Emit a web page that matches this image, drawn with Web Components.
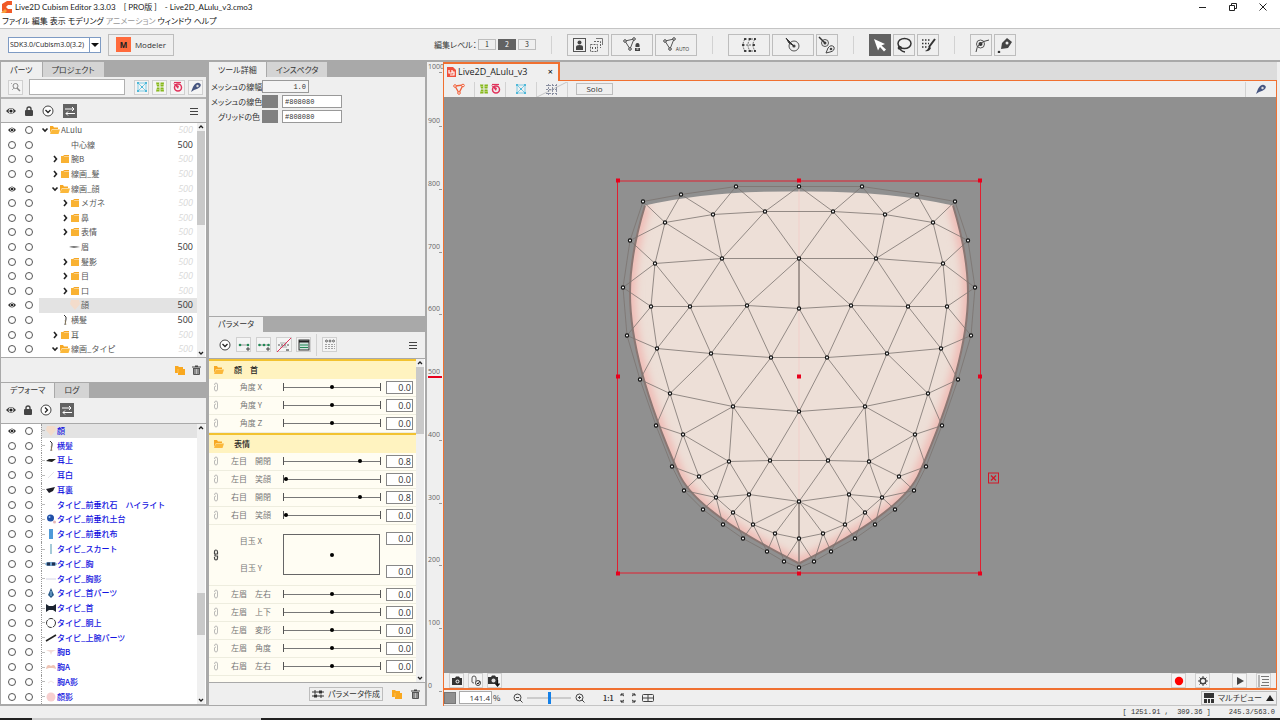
<!DOCTYPE html>
<html lang="ja">
<head>
<meta charset="utf-8">
<title>Live2D Cubism Editor 3.3.03</title>
<style>
  html, body { margin: 0; height: 100%; }
  body {
    font: 8px/12px "Noto Sans CJK JP", sans-serif;
    font-feature-settings: "palt";
    color: #333;
    background: #efefef;
    overflow: hidden;
  }
</style>
</head>
<body>
<cubism-editor></cubism-editor>

<script>
// ---------- icons: [viewBox width, viewBox height, markup] ----------
const ICONS = {
  logo: [12, 12, '<path d="M1 3L6 0H11V4H7L5 6L7 8H11V12H3L1 10Z" fill="#f05a28"/><path d="M0 12L4 8L6 10L4 12Z" fill="#f9a13a"/>'],
  min: [10, 10, '<path d="M1 5.5H8" stroke="#222"/>'],
  restore: [10, 10, '<path d="M1.5 3.5H6.5V8.500H1.500ZM3.500 3V1.500H8.500V6.500H7" fill="none" stroke="#222"/>'],
  close: [10, 10, '<path d="M1.500 1.500L8.500 8.500M8.500 1.500L1.500 8.500" stroke="#222"/>'],
  eye: [10, 8, '<path d="M0 4Q5 -2 10 4Q5 10 0 4Z" fill="#333"/><circle cx="5" cy="4" r="2.500" fill="#eee"/><circle cx="5" cy="4" r="1.600" fill="#222"/>'],
  eyesmall: [8, 6, '<path d="M0 3Q4 -2 8 3Q4 8 0 3Z" fill="#333"/><circle cx="4" cy="3" r="1.900" fill="#eee"/><circle cx="4" cy="3" r="1.200" fill="#222"/>'],
  lock: [8, 10, '<rect y="4" width="8" height="6" rx="1" fill="#444"/><path d="M2 5V3Q2 1 4 1T6 3V5" fill="none" stroke="#444" stroke-width="1.400"/>'],
  down: [12, 12, '<circle cx="6" cy="6" r="5" fill="#fff" stroke="#444"/><path d="M3.500 5L6 7.500L8.500 5" fill="none" stroke="#222" stroke-width="1.300"/>'],
  right: [12, 12, '<circle cx="6" cy="6" r="5" fill="#fff" stroke="#444"/><path d="M5 3.500L7.500 6L5 8.500" fill="none" stroke="#222" stroke-width="1.300"/>'],
  swap: [14, 14, '<rect width="14" height="14" fill="#626262"/><path d="M2 5H11M9 3L11 5L9 7M12 9.500H3M5 7.500L3 9.500L5 11.500" fill="none" stroke="#fff"/>'],
  menu: [10, 10, '<path d="M1 2.500H9M1 5.500H9M1 8.500H9" stroke="#444"/>'],
  search: [12, 12, '<circle cx="5.500" cy="5" r="2.500" fill="none" stroke="#888"/><path d="M7 7L10 10" stroke="#888" stroke-width="1.500"/><path d="M1 3L2 2M2 9L4 7" stroke="#aaa"/>'],
  warp: [12, 12, '<g stroke="#7fcbe4" fill="none"><path d="M2 2H10V10H2ZM2 2L10 10M10 2L2 10"/></g><g fill="#4fb8d8"><path d="M1 1H3V3H1ZM9 1H11V3H9ZM1 9H3V11H1ZM9 9H11V11H9ZM5 5H7V7H5Z"/></g>'],
  grid: [12, 12, '<g fill="#86b81c"><path d="M2 1.500H5.500Q4.500 3 5.500 5.500H3ZM3 6.500H5.500V10.500H2ZM6.500 1.500H10L9.500 5.500H6.500ZM6.500 6.500H9.500L10 10.500H6.500Z"/></g><path d="M2 3.500H10M2 8.500H10" stroke="#c9df8e" stroke-width=".6"/>'],
  rotate: [12, 12, '<circle cx="6" cy="6.500" r="3.500" fill="none" stroke="#e0325a" stroke-width="1.500"/><path d="M1 2L7 5L6 8Z" fill="#e0325a"/><path d="M2 1.500H9" stroke="#e0325a" stroke-width="1.200"/>'],
  pen: [12, 12, '<path d="M1 11L3 6Q6 1 9 2Q12 3 10 6Q8 8 4 9Z" fill="#465580"/><circle cx="7.500" cy="5" r="1.200" fill="#ddd"/>'],
  folder: [9, 8, '<path d="M0 1H3L4 2H8V8H0Z" fill="#f9b233"/><path d="M2 0H8V1.500H4Z" fill="#f5a623"/>'],
  open: [10, 8, '<path d="M0 7V0H3L4 1.500H8V3H2Z" fill="#f7a823"/><path d="M2 3.500H10L8.500 8H0Z" fill="#fbb83a"/>'],
  newfolder: [10, 10, '<path d="M0 1H3L4 2H8V4H10V10H3V8H0Z" fill="#f9a820"/><path d="M3 8V4" stroke="#ffd27a" stroke-width=".6"/>'],
  trash: [9, 10, '<path d="M0 2H9M3 1H6" stroke="#444" stroke-width="1.200"/><path d="M1 3H8V9Q8 10 7 10H2Q1 10 1 9Z" fill="#555"/><path d="M3 4V9M4.500 4V9M6 4V9" stroke="#ddd" stroke-width=".8"/>'],
  key2: [12, 12, '<path d="M2 6H10" stroke="#999"/><circle cx="2" cy="6" r="1.300" fill="#285"/><circle cx="10" cy="6" r="1.300" fill="#285"/><path d="M8 10H12M10 8V12" stroke="#222" stroke-width=".8"/>'],
  key3: [12, 12, '<path d="M1 6H11" stroke="#999"/><circle cx="1.500" cy="6" r="1.300" fill="#285"/><circle cx="6" cy="6" r="1.300" fill="#285"/><circle cx="10.500" cy="6" r="1.300" fill="#285"/><path d="M8 10H12M10 8V12" stroke="#222" stroke-width=".8"/>'],
  keydel: [14, 14, '<path d="M1 7H12" stroke="#888" stroke-width="1.500" stroke-dasharray="2 1"/><path d="M3 5H10M3 9H10" stroke="#aaa"/><path d="M0 14L14 0" stroke="#e0325a"/><path d="M9 12H12" stroke="#222"/>'],
  table: [12, 12, '<rect x="1" y="1" width="10" height="10" fill="#cfe3dc" stroke="#333"/><path d="M1 2.500H11" stroke="#222" stroke-width="2"/><path d="M2 6H10M2 8.500H10" stroke="#285" stroke-width="1.200"/>'],
  dots: [12, 12, '<g fill="none" stroke="#444" stroke-width=".8"><circle cx="2.500" cy="2" r="1"/><circle cx="6" cy="2" r="1"/><circle cx="9.500" cy="2" r="1"/></g><path d="M1 5.500H11M1 7.500H11M1 9.500H11" stroke="#999" stroke-width=".9" stroke-dasharray="2 1"/>'],
  clip: [6, 10, '<path d="M1.500 3Q1.500 1 3 1T4.500 3V7Q4.500 9 3 9T1.500 7V5Q1.500 4 3 4" fill="none" stroke="#aaa" stroke-width=".8"/>'],
  link: [6, 12, '<path d="M1.500 5V3Q1.500 1 3 1T4.500 3V5H2V7H4.500V9Q4.500 11 3 11T1.500 9V8" fill="none" stroke="#444" stroke-width="1.200"/>'],
  sliders: [12, 10, '<path d="M0 3H12M0 7H12" stroke="#333"/><path d="M7 1.500H10V4.500H7ZM2 5.500H5V8.500H2Z" fill="#333"/><path d="M3 1V5M9 5.500V9" stroke="#333"/>'],
  atlas: [30, 14, '<rect x=".5" y=".5" width="12" height="13" fill="none" stroke="#555"/><circle cx="6.500" cy="4.500" r="2" fill="#444"/><path d="M3 12V9Q3 7 6.500 7T10 9V12Z" fill="#444"/><path d="M17.500 6.500H24.500V13.500H17.500ZM21 3.500H27.500V10" fill="none" stroke="#666" stroke-dasharray="2 1"/><path d="M23 .500H29.500V7" fill="none" stroke="#777"/><path d="M19 9H20V11H19ZM22 9H23V11H22Z" fill="#555"/>'],
  meshpen: [18, 16, '<g fill="none" stroke="#555"><path d="M2 4L11 2L7 12Z"/></g><g fill="#eee" stroke="#444"><circle cx="2" cy="4" r="1.300"/><circle cx="11" cy="2" r="1.300"/><circle cx="7" cy="12" r="1.300"/></g><path d="M14.500 6Q17 6 16.500 10H12.500Q12 6 14.500 6ZM12 11H17V14H12Z" fill="#444"/><path d="M13.500 12H15.500" stroke="#fff"/>'],
  mesh: [14, 16, '<path d="M2 4L11 2L7 12Z" fill="none" stroke="#555"/><g fill="#eee" stroke="#444"><circle cx="2" cy="4" r="1.300"/><circle cx="11" cy="2" r="1.300"/><circle cx="7" cy="12" r="1.300"/></g>'],
  warpnew: [16, 16, '<path d="M4 2H14M2 8H14M4 14H14M4 2Q0 8 4 14M9 2Q5 8 9 14M14 2Q10 8 14 14" fill="none" stroke="#666" stroke-dasharray="2 1"/><g fill="#222"><circle cx="4" cy="2" r="1.100"/><circle cx="9" cy="2" r="1.100"/><circle cx="14" cy="2" r="1.100"/><circle cx="4" cy="14" r="1.100"/><circle cx="9" cy="14" r="1.100"/><circle cx="14" cy="14" r="1.100"/><circle cx="2" cy="8" r="1.100"/><circle cx="13" cy="8" r="1.100"/></g>'],
  rotnew: [16, 16, '<circle cx="9" cy="9" r="5" fill="none" stroke="#555"/><circle cx="9" cy="9" r="1.600" fill="#444"/><path d="M1 1L9 9L4 6Z" fill="#333" stroke="#333"/>'],
  rotpen: [18, 18, '<circle cx="7" cy="7" r="3.500" fill="none" stroke="#555"/><circle cx="7" cy="7" r="1.500" fill="#444"/><path d="M1 1L7 7" stroke="#333" stroke-width="1.500"/><path d="M8 17L10 12Q13 8 16 11Q17 15 12 16Z" fill="none" stroke="#444"/><circle cx="13" cy="13" r="1.300" fill="#444"/>'],
  arrow: [14, 14, '<path d="M1 1L12 6L8.500 7.500L13 11.500L11 13.500L7 9L5 12.500Z" fill="#fff"/>'],
  lasso: [16, 16, '<ellipse cx="8.500" cy="6.500" rx="6.500" ry="5" fill="none" stroke="#333" stroke-width="1.500"/><path d="M3 9Q1 13 5 12Q6 9 3 10Q4 14 9 15" fill="none" stroke="#333" stroke-width="1.300"/>'],
  brush: [16, 16, '<path d="M2 3H11M2 6.500H9M2 10H7" stroke="#333" stroke-width="1.300" stroke-dasharray="1.500 1.500"/><path d="M15 2L9 10" stroke="#333" stroke-width="2"/><path d="M9 9L11 11Q9 15 5 14Q8 13 9 9Z" fill="#333"/>'],
  curve: [16, 16, '<circle cx="7.500" cy="7" r="4" fill="none" stroke="#555"/><circle cx="7.500" cy="7" r="2" fill="#333"/><path d="M3 15Q4 5 16 3" fill="none" stroke="#444"/>'],
  nib: [16, 16, '<path d="M4 12L5 6L10 1L15 5L11 11Z" fill="#444"/><circle cx="10" cy="6" r="1.500" fill="#eee"/><circle cx="2" cy="15" r="1.300" fill="#333"/>'],
  doc: [9, 10, '<path d="M0 0H6L9 3V10H0Z" fill="#f0503c"/><path d="M2 3V6H5V3M5 5H7V8H3" fill="none" stroke="#fff" stroke-width="1.200"/>'],
  meshred: [14, 12, '<path d="M3 3L11 2L7 10Z" fill="none" stroke="#f0603a" stroke-width="1.300"/><g fill="#fff" stroke="#f0603a"><circle cx="3" cy="3" r="1.300"/><circle cx="11" cy="2.500" r="1.300"/><circle cx="7" cy="10" r="1.300"/></g>'],
  gridoff: [30, 15, '<path d="M0 15L30 0" stroke="#bbb" stroke-width=".8"/><path d="M9 3.500H21M9 7.500H21M9 11.500H21M11.500 2V13M15.500 2V13M19.500 2V13" stroke="#8a8fa0" stroke-dasharray="2 1"/>'],
  camera: [12, 10, '<path d="M1 2H4L5 .500H8L9 2H11V9H1Z" fill="#333"/><circle cx="6.500" cy="5.500" r="2" fill="#ddd"/><circle cx="6.500" cy="5.500" r="1" fill="#333"/>'],
  clips: [12, 12, '<path d="M6 7V3Q6 1 4 1T2 3V7Q2 8 4 8" fill="none" stroke="#555"/><circle cx="8" cy="8" r="2.500" fill="#eee" stroke="#444"/><path d="M7 8L8 9L10 6" fill="none" stroke="#222"/>'],
  camdown: [13, 12, '<path d="M0 2H3L4 .500H7L8 2H10V9H0Z" fill="#333"/><circle cx="5.500" cy="5.500" r="2" fill="#ddd"/><path d="M9.500 5V10M7.500 8.500L9.500 11L11.500 8.500" fill="none" stroke="#111" stroke-width="1.300"/>'],
  rec: [10, 10, '<circle cx="5" cy="5" r="4.200" fill="#f00"/>'],
  gear: [10, 10, '<circle cx="5" cy="5" r="2.800" fill="none" stroke="#444" stroke-width="1.400"/><path d="M5 0V2M5 8V10M0 5H2M8 5H10M1.500 1.500L3 3M7 7L8.500 8.500M8.500 1.500L7 3M3 7L1.500 8.500" stroke="#444"/>'],
  play: [10, 10, '<path d="M2 1L9 5L2 9Z" fill="#444"/>'],
  list: [12, 12, '<path d="M3 1.500H11M4 4.500H11M4 7.500H11M3 10.500H11" stroke="#777"/><path d="M1 0V12" stroke="#777"/>'],
  zoomout: [10, 10, '<circle cx="4.500" cy="4.500" r="3.500" fill="none" stroke="#444"/><path d="M3 4.500H6M7 7L9.500 9.500" stroke="#444"/>'],
  zoomin: [10, 10, '<circle cx="4.500" cy="4.500" r="3.500" fill="none" stroke="#444"/><path d="M3 4.500H6M4.500 3V6M7 7L9.500 9.500" stroke="#444"/>'],
  fit: [16, 10, '<path d="M1 3V1H4M1 1L4 3M15 3V1H12M15 1L12 3M1 7V9H4M1 9L4 7M15 7V9H12M15 9L12 7" fill="none" stroke="#333"/>'],
  center: [14, 10, '<rect x="1.500" y="1.500" width="11" height="7" rx="1" fill="none" stroke="#444"/><path d="M2 5H12M7 2V8" stroke="#444"/>'],
  multi: [10, 10, '<path d="M0 0H10V5H0ZM0 6H3V10H0ZM4 6H6V10H4ZM7 6H10V10H7Z" fill="#333"/>'],
  up: [8, 6, '<path d="M4 0L8 6H0Z" fill="#222"/>'],
};

class UiIcon extends HTMLElement {
  constructor() {
    super();
    this._shadowRoot = this.attachShadow({ mode: 'open' });
  }
  connectedCallback() {
    const [w, h, body] = ICONS[this.getAttribute('name')];
    this._shadowRoot.innerHTML = `
      <style>
        :host { display: inline-flex; flex: none; }
        svg { display: block; }
      </style>
      <svg width="${w}" height="${h}" viewBox="0 0 ${w} ${h}" aria-hidden="true">${body}</svg>`;
  }
}
customElements.define('ui-icon', UiIcon);

// push button, icon and/or text goes in the slot
class UiButton extends HTMLElement {
  constructor() {
    super();
    this._shadowRoot = this.attachShadow({ mode: 'open' });
  }
  connectedCallback() {
    this._shadowRoot.innerHTML = `
      <style>
        :host { display: inline-flex; flex: none; width: 22px; height: 22px; }
        button {
          flex: 1; display: flex; align-items: center; justify-content: center; gap: 4px;
          padding: 0; border: 1px solid #bdbdbd; background: #efefef;
          font: inherit; font-feature-settings: inherit; color: inherit; white-space: nowrap;
        }
        :host([wide]) { width: 42px; }
        :host([mini]) { width: 18px; height: 11px; font-size: 7px; line-height: 9px; }
        :host([small]) { width: 15px; height: 15px; }
        :host([small]) button { border-color: #d0d0d0; background: #f4f4f4; }
        :host([bare]) { width: 14px; height: 14px; }
        :host([bare]) button { border: 0; background: none; }
        :host([auto]) { width: auto; height: 14px; }
        :host([auto]) button { padding: 0 2px; }
        :host([on]) button { background: #626262; border-color: #626262; color: #fff; }
      </style>
      <button type="button" aria-label="${this.getAttribute('label') || ''}"><slot></slot></button>`;
    if (!this.hasAttribute('label')) {
      this._shadowRoot.querySelector('button').removeAttribute('aria-label');
    }
  }
}
customElements.define('ui-button', UiButton);

class ScrollBar extends HTMLElement {
  constructor() {
    super();
    this._shadowRoot = this.attachShadow({ mode: 'open' });
  }
  connectedCallback() {
    this._shadowRoot.innerHTML = `
      <style>
        :host { display: flex; flex: none; flex-direction: column; align-items: center; width: 8px; background: #f0f0f0; }
        svg { flex: none; }
        i { width: 8px; background: #c9c9c9; flex: ${this.getAttribute('size')}; }
        .before { background: none; flex: ${this.getAttribute('from')}; }
        .after { background: none; flex: ${100 - this.getAttribute('from') - this.getAttribute('size')}; }
      </style>
      <svg width="8" height="8"><path d="M2 5L4 3L6 5" fill="none" stroke="#222" stroke-width="1.300"/></svg>
      <i class="before"></i><i></i><i class="after"></i>
      <svg width="8" height="8"><path d="M2 3L4 5L6 3" fill="none" stroke="#222" stroke-width="1.300"/></svg>`;
  }
}
customElements.define('scroll-bar', ScrollBar);

// panel with a tab strip, first tab is the current one
class DockPanel extends HTMLElement {
  constructor() {
    super();
    this._shadowRoot = this.attachShadow({ mode: 'open' });
  }
  connectedCallback() {
    const tabs = this.getAttribute('tabs').split(',');
    this._shadowRoot.innerHTML = `
      <style>
        :host { display: flex; flex-direction: column; min-height: 0; background: #efefef; overflow: hidden; }
        nav { display: flex; gap: 1px; height: 15px; flex: none; background: #a9a9a9; }
        button {
          border: 0; padding: 0 9px; background: #d4d4d4; color: #333;
          font: inherit; font-feature-settings: inherit; line-height: 14px;
        }
        button:first-child { background: #efefef; }
      </style>
      <nav>${tabs.map(t => `<button type="button">${t}</button>`).join('')}</nav>
      <slot></slot>`;
  }
}
customElements.define('dock-panel', DockPanel);

// small pictures of the drawables
const THUMBS = {
  face: '<path d="M2 1H10L11 5L6 11L1 5Z" fill="#f3dccb"/>',
  brow: '<path d="M0 6Q4 4 11 6L5 7Z" fill="#777"/>',
  hair: '<path d="M5 1L7 3V5L6 11" fill="none" stroke="#333"/><path d="M6 6L7 11" stroke="#b8a070" stroke-width=".6"/>',
  eartop: '<path d="M1 7L4 5L11 5L7 8Z" fill="#222"/>',
  earwhite: '<path d="M3 9L9 3" stroke="#e4e4e4"/>',
  earback: '<path d="M1 5L10 3L8 7L4 9Z" fill="#1c1c26"/>',
  gem: '<circle cx="5.500" cy="5" r="3.500" fill="#1f4fa8"/><circle cx="4.500" cy="4" r="1" fill="#9cc4f0"/><circle cx="9.500" cy="9" r="1.500" fill="#e6b8b8"/>',
  cloth: '<path d="M4 1H8V11H4Z" fill="#4f9ad8"/>',
  skirt: '<path d="M6 1V11" stroke="#7fb4c8" stroke-width="1.400"/>',
  chest: '<path d="M0 6Q1 4 3 4H9Q11 4 12 6Q11 8 9 8H3Q1 8 0 6Z" fill="#6f9fc8"/><path d="M2 4.500H5V7.500H2ZM7 4.500H10V7.500H7Z" fill="#203050"/>',
  line: '<path d="M1 6H11" stroke="#d4d4e4"/>',
  drop: '<path d="M6 1L9 8L6 11L3 8Z" fill="#285888"/><path d="M6 4V9" stroke="#8cc4e8"/>',
  bow: '<path d="M1 2L4 4H8L11 2V10L8 8H4L1 10Z" fill="#1c2430"/>',
  ring: '<circle cx="6" cy="6" r="4.500" fill="none" stroke="#333" stroke-dasharray="5 1"/>',
  stick: '<path d="M1 9L11 3" stroke="#222" stroke-width="1.600"/>',
  pinkT: '<path d="M1 4H11L7 6L6 9L5 6Z" fill="#f3dcd6"/>',
  pinkM: '<path d="M1 8Q2 2 6 5Q10 2 11 8L8 7H4Z" fill="#eec4b4"/>',
  faint: '<path d="M3 7L6 5L9 7" fill="none" stroke="#f0e4e4"/>',
  blush: '<circle cx="6" cy="6" r="4.500" fill="#f7cfcf"/>',
};

class TreeRow extends HTMLElement {
  constructor() {
    super();
    this._shadowRoot = this.attachShadow({ mode: 'open' });
  }
  connectedCallback() {
    const kind = this.getAttribute('kind');
    const deep = this.getAttribute('depth') || 0;
    const value = this.getAttribute('value') || '';
    const own = this.hasAttribute('own');
    const arrows = {
      open: '<svg width="8" height="8"><path d="M1.500 2.500L4 5L6.500 2.500" fill="none" stroke="#222" stroke-width="1.600"/></svg>',
      folder: '<svg width="8" height="8"><path d="M3 1L5.500 4L3 7" fill="none" stroke="#222" stroke-width="1.600"/></svg>',
    };
    const icon = arrows[kind] ? `<ui-icon name="${kind}"></ui-icon>` : (THUMBS[kind] ? `<svg width="12" height="12" viewBox="0 0 12 12">${THUMBS[kind]}</svg>` : '');
    const dot = this.hasAttribute('eye') ? '<ui-icon name="eyesmall"></ui-icon>' : '<i></i>';
    this._shadowRoot.innerHTML = `
      <style>
        :host { display: flex; flex: 1; min-height: 0; align-items: stretch; color: #555; font-feature-settings: normal; }
        button { display: flex; align-items: center; justify-content: center; width: 17px; padding: 0; border: 0; background: none; }
        button:first-of-type { margin-left: 2px; }
        i { width: 6px; height: 6px; border: 1px solid #555; border-radius: 50%; }
        .name { flex: 1; display: flex; align-items: center; margin-left: 2px; padding-left: ${2 + deep * 10}px; white-space: nowrap; }
        .arrow { width: 8px; display: flex; flex: none; }
        .icon { width: 12px; display: flex; align-items: center; justify-content: center; flex: none; }
        .value { font: 9px/12px "Open Sans", sans-serif; margin: auto 4px auto auto; color: ${own ? '#333' : '#d8d8d8'}; font-style: ${own ? 'normal' : 'italic'}; }
        :host([selected]) .name { background: #e3e3e3; }
        :host([blue]) { color: #1414e0; font-weight: 500; }
        :host([blue]) .name { margin-left: 4px; padding-left: 0; border-left: 1px dotted #999; }
        :host([blue]) .arrow { width: 3px; height: 1px; background: #bbb; }
      </style>
      <button type="button" aria-label="表示">${dot}</button>
      <button type="button" aria-label="ロック"><i></i></button>
      <div class="name">
        <span class="arrow">${arrows[kind] || ''}</span>
        <span class="icon">${icon}</span>
        <slot></slot>
        ${value ? `<span class="value">${value}</span>` : ''}
      </div>`;
  }
}
customElements.define('tree-row', TreeRow);

class ParamRow extends HTMLElement {
  constructor() {
    super();
    this._shadowRoot = this.attachShadow({ mode: 'open' });
  }
  connectedCallback() {
    const name = this.getAttribute('name');
    const value = this.getAttribute('value') || '0.0';
    const min = this.getAttribute('min') || -1;
    this._shadowRoot.innerHTML = `
      <style>
        :host { display: flex; flex: none; align-items: center; height: 17px; border-bottom: 1px solid #eeeddf; background: #fffdf3; font-feature-settings: normal; }
        ui-icon { margin-left: 4px; }
        label { width: 64px; text-align: center; color: #777; white-space: pre; }
        .track {
          appearance: none; width: 98px; height: 8px; margin: 0 5px 0 0; box-sizing: border-box;
          border: solid #555; border-width: 0 1px;
          background: linear-gradient(#777, #777) center / 100% 1px no-repeat;
        }
        .track::-webkit-slider-thumb { appearance: none; width: 4px; height: 4px; border-radius: 50%; background: #000; }
        .value { box-sizing: border-box; width: 27px; height: 13px; padding: 0 1px 0 0; border: 1px solid #888; background: #fff; font: 9px/11px "Open Sans", sans-serif; color: #333; text-align: right; }
      </style>
      <ui-icon name="clip"></ui-icon>
      <label for="v">${name}</label>
      <input class="track" type="range" min="${min}" max="1" step="0.1" value="${value}" aria-label="${name}">
      <input class="value" id="v" value="${value}">`;
  }
}
customElements.define('param-row', ParamRow);

// two linked parameters edited on one pad
class ParamPad extends HTMLElement {
  constructor() {
    super();
    this._shadowRoot = this.attachShadow({ mode: 'open' });
  }
  connectedCallback() {
    this._shadowRoot.innerHTML = `
      <style>
        :host { display: flex; flex: none; align-items: center; height: 60px; border-bottom: 1px solid #eeeddf; background: #fffdf3; font-feature-settings: normal; }
        ui-icon { margin-left: 4px; }
        .names, .values { display: flex; flex-direction: column; justify-content: space-between; }
        .names { width: 64px; height: 39px; text-align: center; color: #777; }
        .pad { display: grid; place-items: center; box-sizing: border-box; width: 97px; height: 41px; border: 1px solid #666; margin-right: 6px; }
        .pad i { width: 4px; height: 4px; border-radius: 50%; background: #000; }
        .values { height: 46px; }
        input { box-sizing: border-box; width: 27px; height: 13px; padding: 0 1px 0 0; border: 1px solid #888; background: #fff; font: 9px/11px "Open Sans", sans-serif; color: #333; text-align: right; }
      </style>
      <ui-icon name="link"></ui-icon>
      <div class="names"><label for="x">目玉 X</label><label for="y">目玉 Y</label></div>
      <div class="pad"><i></i></div>
      <div class="values"><input id="x" value="0.0"><input id="y" value="0.0"></div>`;
  }
}
customElements.define('param-pad', ParamPad);

class ParamGroup extends HTMLElement {
  constructor() {
    super();
    this._shadowRoot = this.attachShadow({ mode: 'open' });
  }
  connectedCallback() {
    this._shadowRoot.innerHTML = `
      <style>
        :host { display: block; }
        header {
          display: flex; align-items: center; gap: 10px; height: 18px; padding-left: 5px;
          border-top: 2px solid #f2c230; background: #fff3c0; color: #222; font-weight: 500;
          font-feature-settings: normal; white-space: pre;
        }
      </style>
      <header><ui-icon name="open"></ui-icon>${this.getAttribute('name')}</header>
      <slot></slot>`;
  }
}
customElements.define('param-group', ParamGroup);

// ---------- art mesh ----------
// left half only, the right half is mirrored on AXIS
const AXIS = 799;
const OUTER = [[799, 187], [736, 187], [681, 195], [643, 202], [630, 241], [623, 288], [627, 336], [640, 380], [656, 426], [672, 467], [684, 491], [703, 510], [723, 525], [743, 539], [767, 552], [784, 562], [799, 568]];
const INNER = [
  [665, 223], [713, 215], [765, 212], [655, 264], [722, 259], [651, 307], [690, 307], [747, 306],
  [657, 349], [711, 354], [771, 358], [670, 394], [733, 407], [683, 435], [729, 462], [770, 461],
  [699, 477], [716, 498], [749, 495], [733, 513], [753, 525], [775, 534],
];
const CENTER = [[799, 259], [799, 309], [799, 412], [799, 502], [799, 539]];
const EDGES = `o3i0 o2i0 o2i1 o1i1 o1i2 o0i2 i0i1 i1i2 i0o4 o4i3 i0i3 i0i4 i1i4 i2i4 i2c0 i3i4 i4c0 o5i3 o5i5 i3i5
  i3i6 i4i6 i4i7 c0i7 c0c1 i5i6 i6i7 i7c1 o6i5 o6i8 i5i8 i6i8 i6i9 i7i9 i7i10 c1i10 i8i9 i9i10 o7i8 o7i11 i8i11
  i9i11 i9i12 i10i12 i10c2 i11i12 i12c2 i11o8 o8i13 i11i13 i12i13 i12i14 i12i15 c2i15 i13i14 i14i15 o9i13 o9i16
  i13i16 i14i16 i16o10 i16i17 i14i17 i14i18 i15i18 i15c3 i17i18 i18c3 o10i17 o11i17 o12i17 i17i19 i18i19 i19o12
  i19o13 i19i20 i18i20 c3i20 i20o13 i20o14 i20i21 c3i21 i21o14 i21o15 i21c4 c3c4 c4o15 c4o16`;

class MeshCanvas extends HTMLElement {
  constructor() {
    super();
    this._shadowRoot = this.attachShadow({ mode: 'open' });
  }
  connectedCallback() {
    const sets = { o: OUTER, i: INNER, c: CENTER };
    const flip = ([x, y]) => [2 * AXIS - x, y];
    const line = (a, b) => `M${a}L${b}`;
    let d = '';
    const add = (a, b) => { d += line(a, b) + line(flip(a), flip(b)); };
    for (const m of EDGES.matchAll(/([oic])(\d+)([oic])(\d+)/g)) {
      add(sets[m[1]][m[2]], sets[m[3]][m[4]]);
    }
    for (let n = 1; n < OUTER.length; n++) add(OUTER[n - 1], OUTER[n]);
    // rows that cross the axis
    for (const n of [2, 10, 15]) d += line(INNER[n], flip(INNER[n]));

    const points = [...OUTER, ...INNER, ...CENTER];
    const all = [...points, ...points.filter(p => p[0] !== AXIS).map(flip)];
    const sides = 'M645 206Q630 255 630 294C630 350 655 420 678 472C690 502 736 532 799 564C862 532 908 502 920 472C943 420 968 350 968 294Q968 255 953 206';
    const face = sides + 'Q888 191 799 192Q710 191 645 206Z';
    const handles = [[618, 181], [799, 181], [980, 181], [618, 377], [799, 377], [980, 377], [618, 574], [799, 574], [980, 574]];
    this._shadowRoot.innerHTML = `
      <style>
        :host { display: block; flex: 1; min-height: 0; background: #909090; overflow: hidden; }
        svg { display: block; width: 100%; height: 100%; }
      </style>
      <svg viewBox="444 97 832 577" preserveAspectRatio="xMidYMid slice">
        <defs>
          <clipPath id="c"><path d="${face}"/></clipPath>
          <filter id="b"><feGaussianBlur stdDeviation="4"/></filter>
        </defs>
        <path d="${face}" fill="#eddfd7"/>
        <g clip-path="url(#c)"><path d="${sides}" filter="url(#b)" fill="none" stroke="#f0b6b0" stroke-width="10"/></g>
        <path d="${sides}" fill="none" stroke="#8b7773" stroke-width="2"/>
        <path d="M799 181V574" stroke="#f3c9c4" stroke-width=".7"/>
        <path d="${d}" stroke="#7b7370" stroke-width=".8" fill="none"/>
        <rect x="617.500" y="181.500" width="363" height="392" fill="none" stroke="#e02030"/>
        ${all.map(([x, y]) => `<circle cx="${x}" cy="${y}" r="1.600" fill="#fff" stroke="#111" stroke-width="1.200"/>`).join('')}
        ${handles.map(([x, y]) => `<rect x="${x - 2}" y="${y - 2}" width="4" height="4" fill="#e8001c"/>`).join('')}
        <rect x="988.500" y="473.500" width="10" height="10" fill="none" stroke="#d01828"/>
        <path d="M991 476L996 481M996 476L991 481" stroke="#d01828" stroke-width="1.300"/>
      </svg>`;
  }
}
customElements.define('mesh-canvas', MeshCanvas);

class VerticalRuler extends HTMLElement {
  constructor() {
    super();
    this._shadowRoot = this.attachShadow({ mode: 'open' });
  }
  connectedCallback() {
    const marks = [900, 800, 700, 600, 500, 400, 300, 200, 100, 0];
    this._shadowRoot.innerHTML = `
      <style>
        :host { position: relative; display: flex; flex-direction: column; font: 7px/10px "Open Sans", sans-serif; color: #666; background: #efefef; overflow: hidden; padding-left: 1px; }
        div { flex: 1; display: flex; flex-direction: column; justify-content: space-between; margin: 44px 0 15px; }
        /* cursor position */
        b { position: absolute; left: 1px; right: 1px; top: calc(49% - 2px); height: 2px; background: #e8001c; }
        span { position: relative; }
        span::after { content: ""; position: absolute; right: 1px; top: 10px; width: 3px; border-top: 1px solid #999; }
      </style>
      <span>1000</span>
      <div>${marks.map(m => `<span>${m}</span>`).join('')}</div>
      <b></b>`;
  }
}
customElements.define('vertical-ruler', VerticalRuler);

const PARTS = [
  // name, kind, depth, flags
  ['ALulu', 'open', 0, 'eye'],
  ['中心線', '', 1, 'own'],
  ['腕B', 'folder', 1, ''],
  ['線画_髪', 'folder', 1, ''],
  ['線画_顔', 'open', 1, 'eye'],
  ['メガネ', 'folder', 2, ''],
  ['鼻', 'folder', 2, ''],
  ['表情', 'folder', 2, ''],
  ['眉', 'brow', 2, 'own'],
  ['髪影', 'folder', 2, ''],
  ['目', 'folder', 2, ''],
  ['口', 'folder', 2, ''],
  ['顔', 'face', 2, 'own eye selected'],
  ['横髪', 'hair', 1, 'own'],
  ['耳', 'folder', 1, ''],
  ['線画_タイピ', 'open', 1, ''],
];

const DEFORMERS = [
  ['顔', 'face'], ['横髪', 'hair'], ['耳上', 'eartop'], ['耳白', 'earwhite'], ['耳裏', 'earback'],
  ['タイピ_前垂れ石　ハイライト', 'none'], ['タイピ_前垂れ土台', 'gem'], ['タイピ_前垂れ布', 'cloth'],
  ['タイピ_スカート', 'skirt'], ['タイピ_胸', 'chest'], ['タイピ_胸影', 'line'], ['タイピ_首パーツ', 'drop'],
  ['タイピ_首', 'bow'], ['タイピ_胴上', 'ring'], ['タイピ_上腕パーツ', 'stick'], ['胸B', 'pinkT'],
  ['胸A', 'pinkM'], ['胸A影', 'faint'], ['顔影', 'blush'],
];

class CubismEditor extends HTMLElement {
  constructor() {
    super();
    this._shadowRoot = this.attachShadow({ mode: 'open' });
  }

  connectedCallback() {
    this.render();
  }

  render() {
    const parts = PARTS.map(([name, kind, depth, flags]) =>
      `<tree-row kind="${kind}" depth="${depth}" value="500" ${flags}>${name}</tree-row>`).join('');
    const deformers = DEFORMERS.map(([name, kind], n) =>
      `<tree-row blue kind="${kind}" ${n ? '' : 'eye selected'}>${name}</tree-row>`).join('');

    this._shadowRoot.innerHTML = `
      <style>
        :host { display: flex; flex-direction: column; height: 100vh; background: #efefef; }
        .row { display: flex; align-items: center; }
        .grow { flex: 1; }
        input, select { font: inherit; color: inherit; box-sizing: border-box; }

        .title { height: 14px; background: #fff; padding: 0 12px 0 1px; gap: 2px; font-family: Lato, "Noto Sans CJK JP", sans-serif; color: #222; white-space: pre; }
        .title .buttons { display: flex; gap: 20px; }
        .menus { height: 14px; background: #fff; padding-left: 2px; gap: 2px; border-bottom: 1px solid #c4c4c4; }
        .menus a { color: #111; text-decoration: none; }
        .menus a.off { color: #999; }

        .tools { height: 31px; padding-left: 8px; gap: 2px; border-bottom: 2px solid #a9a9a9; }
        .version { position: relative; width: 93px; height: 16px; }
        .version select { appearance: none; width: 100%; height: 16px; padding: 0 12px 0 1px; border: 1px solid #7e9bc4; background: #fff; font: 7px/12px "Open Sans", sans-serif; color: #222; }
        .version::after { content: ""; position: absolute; right: 2px; top: 6px; border: 4px solid transparent; border-top-color: #111; border-bottom: 0; }
        .version::before { content: ""; position: absolute; z-index: 1; right: 11px; top: 1px; height: 14px; border-left: 1px solid #7e9bc4; }
        .modeler { width: 66px; margin-left: 5px; font: 8px/12px "Open Sans", sans-serif; }
        .modeler b { width: 15px; height: 15px; line-height: 15px; background: #ff6a3c; color: #222; text-align: center; }
        .level { margin-left: 258px; width: 42px; white-space: nowrap; }
        .sep { width: 1px; height: 18px; background: #d2d2d2; margin: 0 13px; }
        .auto { font: 5px/6px "Open Sans", sans-serif; align-self: flex-end; margin: 0 0 3px -5px; }

        .work { flex: 1; min-height: 0; display: grid; grid-template-columns: 208px 219px 16px minmax(0, 1fr); }
        .column { display: flex; flex-direction: column; min-height: 0; gap: 1px; border-right: 2px solid #a9a9a9; background: #a9a9a9; padding-left: 1px; box-sizing: border-box; border-bottom: 1px solid #a9a9a9; }
        .f1 { flex: 320 1 0; } .f2 { flex: 323 1 0; } .f3 { flex: 254 1 0; } .f4 { flex: 389 1 0; }

        .search { height: 20px; padding: 0 3px 0 7px; gap: 3px; border-bottom: 2px solid #b4b4b4; flex: none; }
        .search input { width: 97px; height: 16px; border: 1px solid #b0b0b0; background: #fff; margin: 0 6px 0 3px; }
        .heads { height: 23px; padding: 0 7px 0 5px; gap: 9px; flex: none; }
        .heads.short { height: 25px; gap: 8px; }
        .list { flex: 1; min-height: 0; display: flex; border-top: 1px solid #a9a9a9; border-bottom: 1px solid #a9a9a9; background: #fff; padding-right: 1px; }
        .rows { flex: 1; min-width: 0; min-height: 0; display: flex; flex-direction: column; overflow: hidden; }
        .foot { height: 24px; flex: none; justify-content: flex-end; gap: 7px; padding-right: 5px; }

        form { display: grid; grid-template-columns: 49px auto; gap: 2px; align-items: center; padding: 3px 0 0 2px; }
        form label { text-align: right; white-space: nowrap; line-height: 13px; }
        form div { display: flex; gap: 4px; }
        form input { height: 13px; border: 1px solid #999; background: #fff; font: 7px/10px "Liberation Mono", monospace; padding: 0 2px; width: 60px; }
        form #width { width: 47px; background: #f4f4f4; text-align: right; }
        form i { width: 16px; height: 13px; background: #808080; }

        .keys { height: 26px; gap: 5px; padding: 0 7px 0 10px; flex: none; }
        .keys .sep { height: 22px; margin: 0; }
        .params { overflow: hidden; background: #fffdf3; }
        .pfoot { height: 22px; gap: 9px; }

        .document { display: flex; flex-direction: column; min-width: 0; min-height: 0; padding-right: 3px; border-left: 1px solid #f07030; }
        .docs { height: 18px; background: #dcdcdc; align-items: flex-end; border-bottom: 1px solid #f07030; flex: none; }
        .doc { height: 16px; width: 111px; gap: 2px; padding: 0 0 1px 3px; margin-bottom: -1px; background: #efefef; border: solid #f07030; border-width: 2px 2px 0 0; color: #222; font: 9px/14px "Open Sans", sans-serif; }
        .doc button { border: 0; padding: 0 5px 0 0; background: none; font: 9px/12px "Open Sans", sans-serif; margin-left: auto; }
        .view { flex: 1; display: flex; flex-direction: column; min-height: 0; border: solid #f07030; border-width: 0 1px 2px 0; }
        .modes { height: 16px; flex: none; }
        .mode { display: flex; align-items: center; justify-content: center; width: 31px; height: 15px; box-sizing: border-box; border-right: 1px solid #d2d2d2; }
        .mode.last { border: solid #d2d2d2; border-width: 0 0 0 1px; }
        .solo { width: 37px; height: 12px; margin-left: 8px; font: 8px/10px "Open Sans", sans-serif; }
        .capture { height: 15px; gap: 4px; padding: 0 5px; flex: none; }
        .group { display: flex; gap: 9px; margin-left: 18px; }
        .zoom { height: 15px; gap: 2px; flex: none; border-bottom: 1px solid #c4c4c4; }
        .zoom i { width: 12px; height: 12px; background: #909090; border: 1px solid #777; box-sizing: border-box; }
        .zoom .percent { width: 33px; height: 13px; border: 1px solid #aaa; padding: 0 1px; margin-left: 1px; text-align: right; font: 8px/11px "Open Sans", sans-serif; background: #fff; }
        .zoom .unit { margin: 0 9px 0 -1px; }
        .zoom .slide { appearance: none; width: 44px; height: 12px; margin: 0; background: linear-gradient(#ccc, #ccc) center / 100% 2px no-repeat; }
        .slide::-webkit-slider-thumb { appearance: none; width: 3px; height: 12px; background: #1480e8; }
        .zoom .one { width: 18px; margin-left: 10px; font-weight: 700; font-size: 7px; }
        .zoom .fit { width: 18px; }

        .status { height: 12px; justify-content: flex-end; gap: 18px; padding-right: 5px; font: 7px/12px "Liberation Mono", monospace; white-space: pre; flex: none; }
        .strip { height: 2px; flex: none; display: flex; background: #222; }
        .strip::before { content: ""; width: 229px; margin-left: 32px; background: #ccc; }
      </style>

      <div class="row title">
        <ui-icon name="logo"></ui-icon><span>Live2D Cubism Editor 3.3.03　[ PRO版 ]　- Live2D_ALulu_v3.cmo3</span>
        <span class="grow"></span>
        <span class="buttons"><ui-icon name="min"></ui-icon><ui-icon name="restore"></ui-icon><ui-icon name="close"></ui-icon></span>
      </div>
      <nav class="row menus">
        <a href="#">ファイル</a><a href="#">編集</a><a href="#">表示</a><a href="#">モデリング</a><a href="#" class="off">アニメーション</a><a href="#">ウィンドウ</a><a href="#">ヘルプ</a>
      </nav>

      <div class="row tools">
        <div class="version"><select aria-label="ターゲット"><option>SDK3.0/Cubism3.0(3.2)</option></select></div>
        <ui-button class="modeler"><b>M</b>Modeler</ui-button>
        <span class="level">編集レベル：</span>
        <ui-button mini>1</ui-button><ui-button mini on>2</ui-button><ui-button mini>3</ui-button>
        <span class="sep"></span>
        <ui-button wide label="テクスチャ"><ui-icon name="atlas"></ui-icon></ui-button>
        <ui-button wide label="メッシュ手動編集"><ui-icon name="meshpen"></ui-icon></ui-button>
        <ui-button wide><ui-icon name="mesh"></ui-icon><span class="auto">AUTO</span></ui-button>
        <span class="sep"></span>
        <ui-button wide label="ワープ"><ui-icon name="warpnew"></ui-icon></ui-button>
        <ui-button wide label="回転"><ui-icon name="rotnew"></ui-icon></ui-button>
        <ui-button label="回転編集"><ui-icon name="rotpen"></ui-icon></ui-button>
        <span class="sep"></span>
        <ui-button on label="矢印"><ui-icon name="arrow"></ui-icon></ui-button>
        <ui-button label="投げ縄"><ui-icon name="lasso"></ui-icon></ui-button>
        <ui-button label="ブラシ"><ui-icon name="brush"></ui-icon></ui-button>
        <span class="sep"></span>
        <ui-button label="変形パス"><ui-icon name="curve"></ui-icon></ui-button>
        <ui-button label="グルー"><ui-icon name="nib"></ui-icon></ui-button>
      </div>

      <div class="work">
        <div class="column">
          <dock-panel class="f1" tabs="パーツ,プロジェクト">
            <div class="row search">
              <ui-button small label="検索"><ui-icon name="search"></ui-icon></ui-button>
              <input aria-label="検索">
              <ui-button small label="ワープ"><ui-icon name="warp"></ui-icon></ui-button>
              <ui-button small label="メッシュ"><ui-icon name="grid"></ui-icon></ui-button>
              <ui-button small label="回転"><ui-icon name="rotate"></ui-icon></ui-button>
              <ui-button small label="パス"><ui-icon name="pen"></ui-icon></ui-button>
            </div>
            <div class="row heads">
              <ui-icon name="eye"></ui-icon><ui-icon name="lock"></ui-icon><ui-icon name="down"></ui-icon><ui-icon name="swap"></ui-icon>
              <span class="grow"></span><ui-icon name="menu"></ui-icon>
            </div>
            <div class="list"><div class="rows">${parts}</div><scroll-bar from="0" size="43"></scroll-bar></div>
            <div class="row foot"><ui-icon name="newfolder"></ui-icon><ui-icon name="trash"></ui-icon></div>
          </dock-panel>
          <dock-panel class="f2" tabs="デフォーマ,ログ">
            <div class="row heads short">
              <ui-icon name="eye"></ui-icon><ui-icon name="lock"></ui-icon><ui-icon name="right"></ui-icon><ui-icon name="swap"></ui-icon>
            </div>
            <div class="list"><div class="rows">${deformers}</div><scroll-bar from="61" size="16"></scroll-bar></div>
          </dock-panel>
        </div>

        <div class="column">
          <dock-panel class="f3" tabs="ツール詳細,インスペクタ">
            <form>
              <label for="width">メッシュの線幅</label><div><input id="width" value="1.0"></div>
              <label for="line">メッシュの線色</label><div><i></i><input id="line" value="#808080"></div>
              <label for="gridc">グリッドの色</label><div><i></i><input id="gridc" value="#808080"></div>
            </form>
          </dock-panel>
          <dock-panel class="f4" tabs="パラメータ">
            <div class="row keys">
              <ui-icon name="down"></ui-icon>
              <ui-button small label="キー2点"><ui-icon name="key2"></ui-icon></ui-button>
              <ui-button small label="キー3点"><ui-icon name="key3"></ui-icon></ui-button>
              <ui-button small label="キー削除"><ui-icon name="keydel"></ui-icon></ui-button>
              <ui-button small label="キー一覧"><ui-icon name="table"></ui-icon></ui-button>
              <span class="sep"></span>
              <ui-button small label="ブレンド"><ui-icon name="dots"></ui-icon></ui-button>
              <span class="grow"></span><ui-icon name="menu"></ui-icon>
            </div>
            <div class="list">
              <div class="rows params">
                <param-group name="顔　首">
                  <param-row name="角度 X"></param-row>
                  <param-row name="角度 Y"></param-row>
                  <param-row name="角度 Z"></param-row>
                </param-group>
                <param-group name="表情">
                  <param-row name="左目　開閉" min="0" value="0.8"></param-row>
                  <param-row name="左目　笑顔" min="0"></param-row>
                  <param-row name="右目　開閉" min="0" value="0.8"></param-row>
                  <param-row name="右目　笑顔" min="0"></param-row>
                  <param-pad></param-pad>
                  <param-row name="左眉　左右"></param-row>
                  <param-row name="左眉　上下"></param-row>
                  <param-row name="左眉　変形"></param-row>
                  <param-row name="左眉　角度"></param-row>
                  <param-row name="右眉　左右"></param-row>
                </param-group>
              </div>
              <scroll-bar from="0" size="22"></scroll-bar>
            </div>
            <div class="row foot pfoot">
              <ui-button auto><ui-icon name="sliders"></ui-icon>パラメータ作成</ui-button>
              <ui-icon name="newfolder"></ui-icon><ui-icon name="trash"></ui-icon>
            </div>
          </dock-panel>
        </div>

        <vertical-ruler></vertical-ruler>

        <div class="document">
          <div class="row docs">
            <div class="row doc"><ui-icon name="doc"></ui-icon>Live2D_ALulu_v3<button type="button">×</button></div>
          </div>
          <div class="view">
            <div class="row modes">
              <span class="mode"><ui-icon name="meshred"></ui-icon></span>
              <span class="mode"><ui-icon name="grid"></ui-icon><ui-icon name="rotate"></ui-icon></span>
              <span class="mode"><ui-icon name="warp"></ui-icon></span>
              <span class="mode"><ui-icon name="gridoff"></ui-icon></span>
              <ui-button class="solo">Solo</ui-button>
              <span class="grow"></span>
              <span class="mode last"><ui-icon name="pen"></ui-icon></span>
            </div>
            <mesh-canvas></mesh-canvas>
            <div class="row capture">
              <ui-button small label="撮影"><ui-icon name="camera"></ui-icon></ui-button>
              <ui-button small label="履歴"><ui-icon name="clips"></ui-icon></ui-button>
              <ui-button small label="保存"><ui-icon name="camdown"></ui-icon></ui-button>
              <span class="grow"></span>
              <span class="group">
                <ui-button small label="録画"><ui-icon name="rec"></ui-icon></ui-button>
                <ui-button small label="設定"><ui-icon name="gear"></ui-icon></ui-button>
              </span>
              <span class="group">
                <ui-button small label="再生"><ui-icon name="play"></ui-icon></ui-button>
                <ui-button small label="一覧"><ui-icon name="list"></ui-icon></ui-button>
              </span>
            </div>
          </div>
          <div class="row zoom">
            <i></i><input class="percent" value="141.4" aria-label="倍率"><span class="unit">%</span>
            <ui-button bare label="縮小"><ui-icon name="zoomout"></ui-icon></ui-button>
            <input class="slide" type="range" value="50" aria-label="ズーム">
            <ui-button bare label="拡大"><ui-icon name="zoomin"></ui-icon></ui-button>
            <ui-button bare class="one">1:1</ui-button>
            <ui-button bare class="fit" label="全体"><ui-icon name="fit"></ui-icon></ui-button>
            <ui-button bare class="fit" label="中央"><ui-icon name="center"></ui-icon></ui-button>
            <span class="grow"></span>
            <ui-button auto><ui-icon name="multi"></ui-icon>マルチビュー<ui-icon name="up"></ui-icon></ui-button>
          </div>
        </div>
      </div>

      <div class="row status"><span>[ 1251.91 ,  309.36 ]</span><span>245.3/563.0</span></div>
      <div class="strip"></div>
    `;
  }
}
customElements.define('cubism-editor', CubismEditor);
</script>
</body>
</html>
